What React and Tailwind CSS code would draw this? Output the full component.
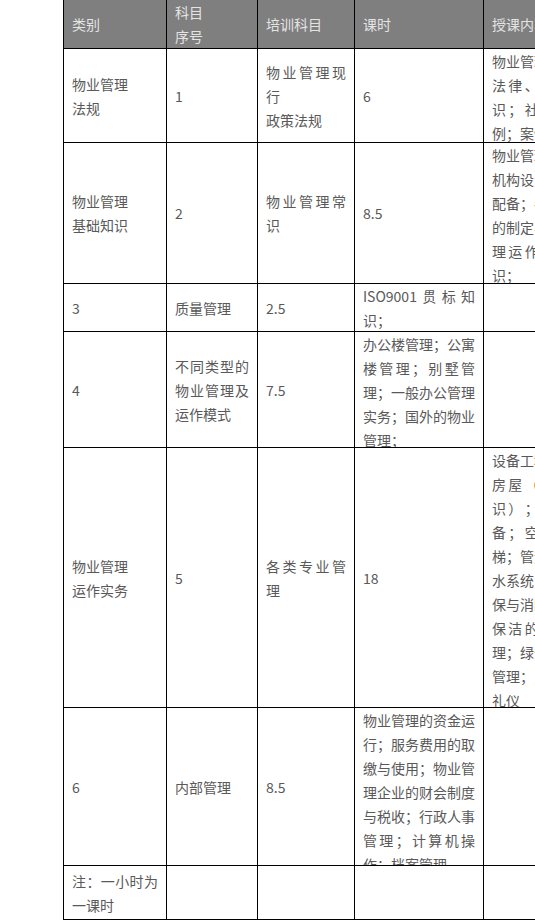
import clsx from "clsx";

const rows = [
  [
    "物业管理\n法规",
    "1",
    "物业管理现行\n政策法规",
    "6",
    "物业管理的概述；法律、法规的知识；社区管理实例；案例分析",
  ],
  [
    "物业管理\n基础知识",
    "2",
    "物业管理常识",
    "8.5",
    "物业管理企业及其机构设置及人员的配备；各规章制度的制定与实施；管理运作的基本知识；",
  ],
  ["3", "质量管理", "2.5", "ISO9001贯标知识；", ""],
  [
    "4",
    "不同类型的物业管理及运作模式",
    "7.5",
    "办公楼管理；公寓楼管理；别墅管理；一般办公管理实务；国外的物业管理；",
    "",
  ],
  [
    "物业管理\n运作实务",
    "5",
    "各类专业管理",
    "18",
    "设备工程的概述；房屋（建筑学知识）；供配电设备；空调器；电梯；管道；暖通；水系统；弱电；安保与消防的管理；保洁的专业化管理；绿化的养护与管理；员工的服务礼仪",
  ],
  [
    "6",
    "内部管理",
    "8.5",
    "物业管理的资金运行；服务费用的取缴与使用；物业管理企业的财会制度与税收；行政人事管理；计算机操作；档案管理",
    "",
  ],
  ["注：一小时为一课时", "", "", "", ""],
];

const headers = ["类别", "科目\n序号", "培训科目", "课时", "授课内容"];

function Cell({ text, head }) {
  return (
    <div
      className={clsx(
        "flex overflow-hidden px-2 text-justify [align-items:safe_center]",
        head ? "bg-[#7f7f7f] text-[#e4e4e4]" : "bg-white text-[#595959]"
      )}
    >
      <div className="w-full whitespace-pre-line">{text}</div>
    </div>
  );
}

export default function App() {
  return (
    <div className="h-[920px] w-[535px] overflow-hidden bg-white pl-[63px]">
      <div className="-mt-px grid w-max grid-cols-[102px_90px_96px_128px_128px] grid-rows-[48px_93px_140px_47px_115px_259px_157px_53px] gap-px bg-black p-px font-['Noto_Sans_CJK_SC','Microsoft_YaHei',sans-serif] text-sm/6 [text-spacing-trim:space-all]">
        {headers.map((h, i) => (
          <Cell key={"h" + i} text={h} head />
        ))}
        {rows.map((row, r) =>
          row.map((text, c) => <Cell key={r + "-" + c} text={text} />)
        )}
      </div>
    </div>
  );
}
